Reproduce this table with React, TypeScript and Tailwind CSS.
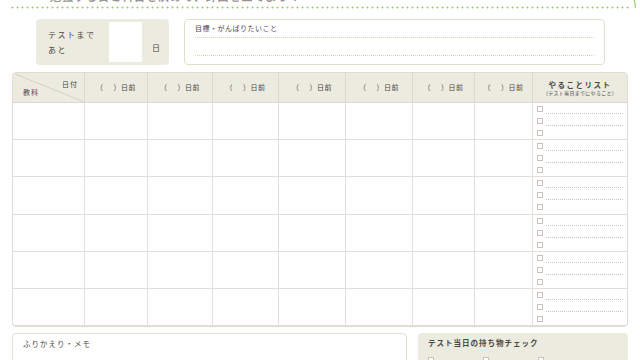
import React from "react";

const font = { fontFamily: '"Noto Sans CJK JP", "Noto Sans", sans-serif' };

function Check() {
  return <div className="w-[6px] h-[6px] border border-[#c9c2bb] bg-white shrink-0" />;
}

function TodoCell() {
  return (
    <div className="flex flex-col justify-center gap-[6px] pl-[4px] pr-[4px] border-b border-[#e2ddd6]">
      <div className="flex items-end gap-[3px] h-[6px]">
        <Check />
        <div className="flex-1 border-b border-dotted border-[#c8c4bc] translate-y-[2px]" />
      </div>
      <div className="flex items-end gap-[3px] h-[6px]">
        <Check />
        <div className="flex-1 border-b border-dotted border-[#c8c4bc] translate-y-[2px]" />
      </div>
      <div className="flex items-end gap-[3px] h-[6px]">
        <Check />
      </div>
    </div>
  );
}

export default function App() {
  const days = Array.from({ length: 7 });
  const rows = Array.from({ length: 6 });
  return (
    <div className="relative w-[640px] h-[360px] overflow-hidden bg-white text-[#4a4744]" style={font}>
      <svg className="absolute right-0 top-0" width="8" height="10" viewBox="0 0 8 10">
        <path d="M2 0 C3 3 4 5 3 8" stroke="#9ccc65" strokeWidth="1.2" fill="none" />
      </svg>
      <div className="-mt-[9px] h-[11px] leading-[11px] pl-[50px] text-[11px] text-[#9a9590] tracking-[1px] font-bold">
        勉強する日と科目を決めて、計画を立てよう！
      </div>
      <div className="mt-[4px] mx-[10px] h-[3px] bg-[radial-gradient(circle,#9ccc65_0.9px,transparent_1.1px)] bg-[length:5px_3px]" />

      <div className="mt-[10px] flex items-stretch h-[46px]">
        <div className="ml-[36px] w-[133px] rounded-[4px] bg-[#ecebe0] flex items-center pl-[12px]">
          <div className="flex flex-col gap-[5px] text-[8px] leading-[10px] tracking-[1.5px] w-[61px]">
            <span>テストまで</span>
            <span>あと</span>
          </div>
          <div className="w-[33px] h-[40px] bg-white" />
          <span className="ml-[10px] mt-[12px] text-[8px]">日</span>
        </div>
        <div className="ml-[15px] w-[421px] rounded-[4px] border border-[#d8e4c8] bg-white px-[10px] pt-[3px]">
          <div className="text-[7px] leading-[10px] tracking-[0.5px]">目標・がんばりたいこと</div>
          <div className="mt-[4px] border-b border-dotted border-[#c8d8b0]" />
          <div className="mt-[17px] border-b border-dotted border-[#c8d8b0]" />
        </div>
      </div>

      <div className="mt-[7px] ml-[12px] w-[616px] h-[255px] rounded-[4px] border border-[#e0dbd3] overflow-hidden grid grid-cols-[72px_63px_65px_66px_67px_67px_62px_58px_1fr] grid-rows-[30px_repeat(6,1fr)]">
        <div className="relative bg-[#ecebe0] border-r border-b border-[#ddd8cf]">
          <svg className="absolute inset-0" width="100%" height="100%" viewBox="0 0 72 30" preserveAspectRatio="none">
            <line x1="0" y1="0" x2="72" y2="30" stroke="#cfc9c0" strokeWidth="0.8" />
          </svg>
          <span className="absolute right-[6px] top-[6px] text-[7px] tracking-[1px]">日付</span>
          <span className="absolute left-[10px] bottom-[5px] text-[7px] tracking-[1px]">教科</span>
        </div>
        {days.map((_, i) => (
          <div key={i} className="bg-[#ecebe0] border-r border-b border-[#ddd8cf] flex items-center justify-center text-[7px] tracking-[0.5px]">
            <span>（</span>
            <span className="ml-[10px]">）日前</span>
          </div>
        ))}
        <div className="bg-[#ecebe0] border-b border-[#ddd8cf] flex flex-col items-center justify-center">
          <span className="text-[7.5px] leading-[9px] font-bold tracking-[1.5px]">やることリスト</span>
          <span className="text-[5px] leading-[7px] tracking-[0.3px]">（テスト当日までにやること）</span>
        </div>
        {rows.map((_, r) => (
          <React.Fragment key={r}>
            <div className="border-r border-b border-[#e2ddd6]" />
            {days.map((_, i) => (
              <div key={i} className="border-r border-b border-[#e2ddd6]" />
            ))}
            <TodoCell />
          </React.Fragment>
        ))}
      </div>

      <div className="mt-[6px] ml-[12px] flex gap-[11px]">
        <div className="w-[395px] h-[40px] rounded-[4px] border border-[#dde4d2] bg-white px-[10px] pt-[5px]">
          <div className="text-[7.5px] leading-[10px] tracking-[1px]">ふりかえり・メモ</div>
        </div>
        <div className="w-[210px] h-[40px] rounded-[4px] bg-[#ecebe0] px-[10px] pt-[5px]">
          <div className="text-[7.5px] leading-[10px] tracking-[1px] font-bold">テスト当日の持ち物チェック</div>
          <div className="mt-[9px] flex gap-[49px]">
            <Check />
            <Check />
            <Check />
          </div>
        </div>
      </div>
    </div>
  );
}
